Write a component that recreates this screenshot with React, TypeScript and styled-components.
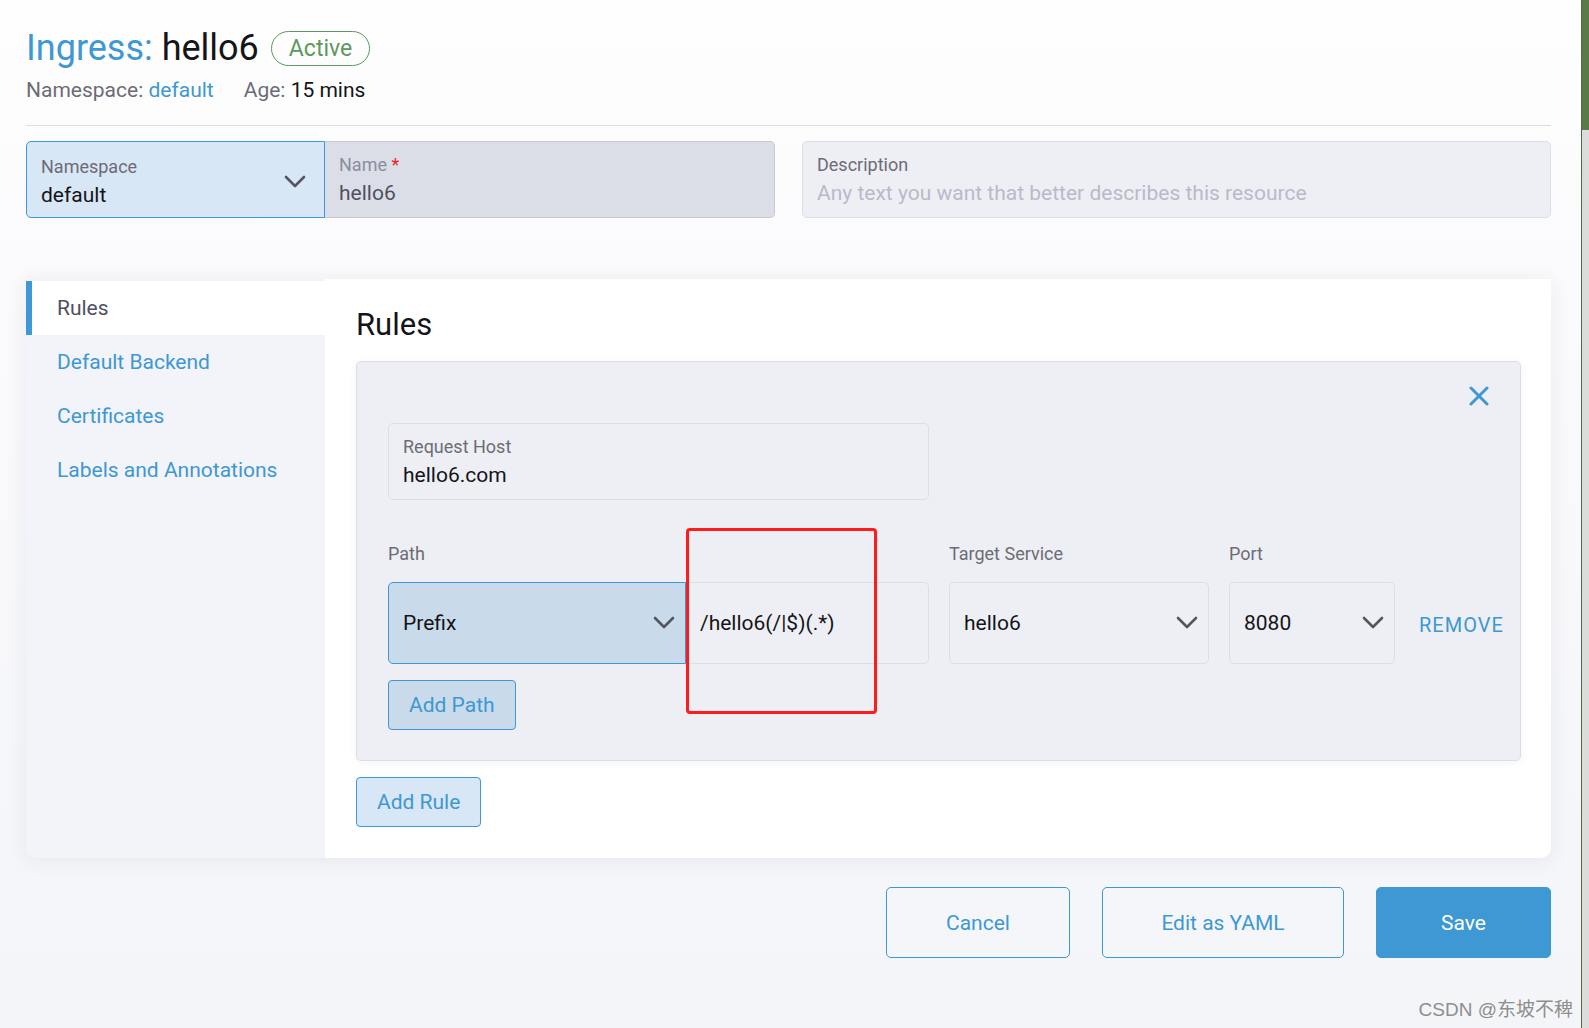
import React from 'react';
import styled, { createGlobalStyle } from 'styled-components';

const BLUE = '#3d98d3';

const GlobalStyle = createGlobalStyle`
  html, body {
    margin: 0;
    padding: 0;
  }
  body {
    font-family: Roboto, "Noto Sans", Arial, sans-serif;
    color: #141419;
    background: #fdfdfe;
  }
  * {
    box-sizing: border-box;
  }
`;

// chevron used by every select
const Chevron = () => (
  <svg width="22" height="14" viewBox="0 0 22 14">
    <polyline points="2,2 11,11 20,2" fill="none" stroke="#55555f" strokeWidth="2.6" strokeLinecap="round" strokeLinejoin="round" />
  </svg>
);

const CloseIcon = () => (
  <svg width="20" height="20" viewBox="0 0 20 20">
    <path d="M2 2 L18 18 M18 2 L2 18" stroke={BLUE} strokeWidth="3" strokeLinecap="round" />
  </svg>
);

type Field = { label: string; value?: string; placeholder?: string; required?: boolean };

const tabs = ['Rules', 'Default Backend', 'Certificates', 'Labels and Annotations'];

const App: React.FC = () => {
  const description: Field = {
    label: 'Description',
    placeholder: 'Any text you want that better describes this resource',
  };

  return (
    <Page>
      <GlobalStyle />
      <Main>
        <TitleRow>
          <Title>
            <Kind>Ingress:</Kind> hello6
          </Title>
          <Badge>Active</Badge>
        </TitleRow>
        <Meta>
          <MetaItem>
            Namespace: <MetaLink>default</MetaLink>
          </MetaItem>
          <MetaItem>
            Age: <MetaValue>15 mins</MetaValue>
          </MetaItem>
        </Meta>
        <Divider />

        <FormRow>
          <Group>
            <Box $tone="select" $part="left">
              <BoxText>
                <BoxLabel>Namespace</BoxLabel>
                <BoxValue>default</BoxValue>
              </BoxText>
              <Chevron />
            </Box>
            <Box $tone="disabled" $part="right">
              <BoxText>
                <BoxLabel $muted>
                  Name <Required>*</Required>
                </BoxLabel>
                <BoxValue $muted>hello6</BoxValue>
              </BoxText>
            </Box>
          </Group>
          <Box $tone="plain">
            <BoxText>
              <BoxLabel>{description.label}</BoxLabel>
              <Placeholder>{description.placeholder}</Placeholder>
            </BoxText>
          </Box>
        </FormRow>

        <Card>
          <SideNav>
            {tabs.map((t, i) => (
              <Tab key={t} $active={i === 0}>
                {t}
              </Tab>
            ))}
          </SideNav>
          <Content>
            <Heading>Rules</Heading>
            <RuleBox>
              <CloseRow>
                <CloseIcon />
              </CloseRow>
              <HostBox>
                <BoxLabel>Request Host</BoxLabel>
                <BoxValue>hello6.com</BoxValue>
              </HostBox>
              <PathGrid>
                <ColLabel>Path</ColLabel>
                <ColLabel>Target Service</ColLabel>
                <ColLabel>Port</ColLabel>
                <span />
                <PathGroup>
                  <RowSelect $tone="active" $width={298}>
                    <span>Prefix</span>
                    <Chevron />
                  </RowSelect>
                  <PathInput>/hello6(/|$)(.*)</PathInput>
                </PathGroup>
                <RowSelect $tone="plain">
                  <span>hello6</span>
                  <Chevron />
                </RowSelect>
                <RowSelect $tone="plain">
                  <span>8080</span>
                  <Chevron />
                </RowSelect>
                <RemoveLink>Remove</RemoveLink>
              </PathGrid>
              <SmallButton $tone="dark">Add Path</SmallButton>
              <Annotation />
            </RuleBox>
            <SmallButton $tone="light">Add Rule</SmallButton>
          </Content>
        </Card>

        <Footer>
          <FooterButton $width={184}>Cancel</FooterButton>
          <FooterButton $width={242}>Edit as YAML</FooterButton>
          <FooterButton $width={175} $primary>
            Save
          </FooterButton>
        </Footer>
      </Main>
      <Strip>
        <StripTop />
      </Strip>
      <Watermark>CSDN @东坡不稗</Watermark>
    </Page>
  );
};

// Styled Components
const Page = styled.div`
  position: relative;
  display: flex;
  min-height: 1028px;
  overflow: hidden;
`;

const Main = styled.div`
  flex: 1;
  min-width: 0;
  padding: 30px 30px 0 26px;
  background: linear-gradient(180deg, #fefefe 0%, #fbfbfd 25%, #f4f5f9 100%);
`;

const TitleRow = styled.div`
  display: flex;
  align-items: center;
  gap: 12px;
  height: 36px;
`;

const Title = styled.h1`
  margin: 0;
  font-size: 36px;
  font-weight: 400;
  line-height: 1;
  color: #141419;
`;

const Kind = styled.span`
  color: ${BLUE};
`;

const Badge = styled.span`
  display: inline-flex;
  align-items: center;
  height: 35px;
  padding: 0 17px;
  border: 1.5px solid #5d995d;
  border-radius: 18px;
  color: #5d995d;
  font-size: 23px;
`;

const Meta = styled.div`
  display: flex;
  gap: 30px;
  margin-top: 12px;
  font-size: 21px;
  line-height: 24px;
`;

const MetaItem = styled.span`
  color: #6c6c76;
`;

const MetaLink = styled.span`
  color: ${BLUE};
`;

const MetaValue = styled.span`
  color: #141419;
`;

const Divider = styled.hr`
  margin: 23px 0 0;
  border: none;
  border-top: 1px solid #dcdee7;
`;

const FormRow = styled.div`
  display: grid;
  grid-template-columns: 1fr 1fr;
  gap: 27px;
  height: 77px;
  margin-top: 15px;
`;

const Group = styled.div`
  display: flex;
`;

const Box = styled.div<{ $tone: 'select' | 'disabled' | 'plain'; $part?: 'left' | 'right' }>`
  display: flex;
  align-items: center;
  justify-content: space-between;
  padding: ${(p) => (p.$tone === 'select' ? '4px' : '0')} 18px 0 14px;
  border: 1px solid
    ${(p) => (p.$tone === 'select' ? BLUE : p.$tone === 'disabled' ? '#c6c8d4' : '#dcdee7')};
  border-radius: ${(p) => (p.$part === 'left' ? '5px 0 0 5px' : p.$part === 'right' ? '0 5px 5px 0' : '5px')};
  background: ${(p) => (p.$tone === 'select' ? '#d8e7f5' : p.$tone === 'disabled' ? '#dcdee7' : '#eeeff4')};
  ${(p) => (p.$part === 'left' ? 'width: 299px;' : '')}
  ${(p) => (p.$part === 'right' ? 'flex: 1; border-left: none;' : '')}
`;

const BoxText = styled.div`
  display: flex;
  flex-direction: column;
  gap: 4px;
`;

const BoxLabel = styled.div<{ $muted?: boolean }>`
  font-size: 18px;
  line-height: 22px;
  color: ${(p) => (p.$muted ? '#8a8da0' : '#6c6c76')};
`;

const Required = styled.span`
  color: #f01f1f;
`;

const BoxValue = styled.div<{ $muted?: boolean }>`
  font-size: 21px;
  line-height: 26px;
  color: ${(p) => (p.$muted ? '#4f5061' : '#141419')};
`;

const Placeholder = styled.div`
  font-size: 21px;
  line-height: 26px;
  color: #b8bacb;
`;

const Card = styled.div`
  display: grid;
  grid-template-columns: 299px minmax(0, 1fr);
  height: 579px;
  margin-top: 61px;
  border-radius: 0 0 10px 10px;
  background: #fff;
  box-shadow: 0 2px 22px rgba(40, 44, 70, 0.08);
  overflow: hidden;
`;

const SideNav = styled.nav`
  display: flex;
  flex-direction: column;
  padding-top: 2px;
  background: #f3f4f9;
`;

const Tab = styled.div<{ $active?: boolean }>`
  display: flex;
  align-items: center;
  height: 54px;
  padding-left: 25px;
  border-left: 6px solid ${(p) => (p.$active ? BLUE : 'transparent')};
  background: ${(p) => (p.$active ? '#fff' : 'transparent')};
  color: ${(p) => (p.$active ? '#4f5061' : BLUE)};
  font-size: 21px;
`;

const Content = styled.div`
  padding: 28px 30px 30px 31px;
`;

const Heading = styled.h2`
  margin: 0 0 18px;
  font-size: 31px;
  font-weight: 400;
  line-height: 36px;
  color: #141419;
`;

const RuleBox = styled.div`
  position: relative;
  padding: 24px 31px 30px 31px;
  border: 1px solid #dcdee7;
  border-radius: 5px;
  background: #eeeff4;
  box-shadow: 0 2px 10px rgba(40, 44, 70, 0.05);
`;

const CloseRow = styled.div`
  display: flex;
  justify-content: flex-end;
  height: 20px;
`;

const HostBox = styled.div`
  display: flex;
  flex-direction: column;
  justify-content: center;
  gap: 4px;
  width: 541px;
  height: 77px;
  margin-top: 17px;
  padding: 0 14px;
  border: 1px solid #dcdee7;
  border-radius: 5px;
`;

const PathGrid = styled.div`
  display: grid;
  grid-template-columns: 541px 260px 166px minmax(0, 1fr);
  column-gap: 20px;
  row-gap: 16px;
  align-items: center;
  margin-top: 42px;
`;

const ColLabel = styled.div`
  font-size: 18px;
  line-height: 24px;
  color: #6c6c76;
`;

const PathGroup = styled.div`
  display: flex;
  height: 82px;
`;

const RowSelect = styled.div<{ $tone: 'active' | 'plain'; $width?: number }>`
  display: flex;
  align-items: center;
  justify-content: space-between;
  height: 82px;
  padding: 0 10px 0 14px;
  font-size: 21px;
  color: #141419;
  border: 1px solid ${(p) => (p.$tone === 'active' ? BLUE : '#dcdee7')};
  border-radius: ${(p) => (p.$tone === 'active' ? '5px 0 0 5px' : '5px')};
  background: ${(p) => (p.$tone === 'active' ? '#c9dbea' : '#eeeff4')};
  ${(p) => (p.$width ? `width: ${p.$width}px; flex-shrink: 0;` : '')}
`;

const PathInput = styled.div`
  flex: 1;
  display: flex;
  align-items: center;
  padding: 0 14px;
  border: 1px solid #dcdee7;
  border-left: none;
  border-radius: 0 5px 5px 0;
  font-size: 21px;
  color: #141419;
`;

const RemoveLink = styled.span`
  margin-left: 4px;
  padding-top: 4px;
  color: ${BLUE};
  font-size: 20px;
  letter-spacing: 1px;
  text-transform: uppercase;
  white-space: nowrap;
`;

const SmallButton = styled.button<{ $tone: 'dark' | 'light' }>`
  display: block;
  height: 50px;
  margin-top: 16px;
  padding: 0 20px;
  border: 1px solid ${BLUE};
  border-radius: 4px;
  background: ${(p) => (p.$tone === 'dark' ? '#c9dbea' : '#d8e7f5')};
  color: ${BLUE};
  font-family: inherit;
  font-size: 21px;
`;

// red marker drawn over the screenshot
const Annotation = styled.div`
  position: absolute;
  left: 329px;
  top: 166px;
  width: 191px;
  height: 186px;
  border: 3px solid #ff1b1b;
  border-radius: 4px;
  pointer-events: none;
`;

const Footer = styled.div`
  display: flex;
  justify-content: flex-end;
  gap: 32px;
  margin-top: 29px;
`;

const FooterButton = styled.button<{ $width: number; $primary?: boolean }>`
  width: ${(p) => p.$width}px;
  height: 71px;
  border: 1px solid ${BLUE};
  border-radius: 5px;
  background: ${(p) => (p.$primary ? BLUE : 'transparent')};
  color: ${(p) => (p.$primary ? '#fff' : BLUE)};
  font-family: inherit;
  font-size: 21px;
`;

const Strip = styled.div`
  flex: 0 0 8px;
  border-left: 1px solid #4e6b3c;
  background: #dcdcdc;
`;

const StripTop = styled.div`
  height: 130px;
  background: #5b7a4a;
`;

const Watermark = styled.div`
  position: absolute;
  right: 16px;
  bottom: 7px;
  font-family: Arial, "Noto Sans CJK SC", sans-serif;
  font-size: 19px;
  color: #8e8e8e;
`;

export default App;
